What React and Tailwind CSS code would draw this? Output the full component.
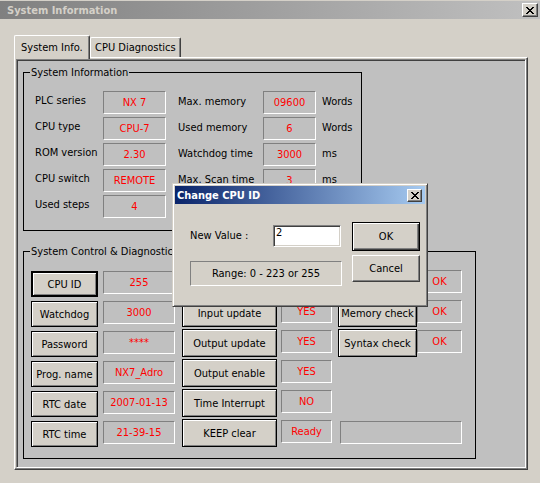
import React from "react";

const FONT = "font-['DejaVu_Sans_Condensed','DejaVu_Sans',sans-serif]";

function CloseX() {
  const px = [
    [0, 0], [1, 0], [6, 0], [7, 0],
    [1, 1], [2, 1], [5, 1], [6, 1],
    [2, 2], [3, 2], [4, 2], [5, 2],
    [3, 3], [4, 3],
    [2, 4], [3, 4], [4, 4], [5, 4],
    [1, 5], [2, 5], [5, 5], [6, 5],
    [0, 6], [1, 6], [6, 6], [7, 6],
  ];
  return (
    <svg width="8" height="7" viewBox="0 0 8 7" shapeRendering="crispEdges">
      {px.map(([x, y], i) => (
        <rect key={i} x={x} y={y} width="1" height="1" fill="#000" />
      ))}
    </svg>
  );
}

function CloseBtn({ className }) {
  return (
    <div
      className={`flex items-center justify-center bg-[#d4d0c8] border border-t-white border-l-white border-r-[#404040] border-b-[#404040] shadow-[inset_-1px_-1px_0_#808080] ${className}`}
    >
      <CloseX />
    </div>
  );
}

function Val({ children, className }) {
  return (
    <div
      className={`flex items-center justify-center border border-t-[#808080] border-l-[#808080] border-r-white border-b-white text-[#ff0000] ${className}`}
    >
      {children}
    </div>
  );
}

function Btn({ children, className, focused }) {
  return (
    <div
      className={`flex items-center justify-center bg-[#d4d0c8] border-black shadow-[inset_1px_1px_0_#fff,inset_-1px_-1px_0_#808080] ${
        focused ? "border-2" : "border"
      } ${className}`}
    >
      {children}
    </div>
  );
}

const infoRows = [
  ["PLC series", "NX 7", "Max. memory", "09600", "Words"],
  ["CPU type", "CPU-7", "Used memory", "6", "Words"],
  ["ROM version", "2.30", "Watchdog time", "3000", "ms"],
  ["CPU switch", "REMOTE", "Max. Scan time", "3", "ms"],
  ["Used steps", "4", "", "", ""],
];

// Row 0 of the middle/right columns lies under the dialog; only the "OK" value shows.
const ctrlRows = [
  ["CPU ID", "255", "", "", "", "OK"],
  ["Watchdog", "3000", "Input update", "YES", "Memory check", "OK"],
  ["Password", "****", "Output update", "YES", "Syntax check", "OK"],
  ["Prog. name", "NX7_Adro", "Output enable", "YES", null, null],
  ["RTC date", "2007-01-13", "Time Interrupt", "NO", null, null],
  ["RTC time", "21-39-15", "KEEP clear", "Ready", "empty", null],
];

export default function App() {
  return (
    <div
      className={`${FONT} relative w-[540px] h-[483px] overflow-hidden bg-[#d4d0c8] text-[11px] leading-[13px] text-black`}
    >
      {/* Window title bar */}
      <div className="mt-[1px] h-[18px] flex items-center justify-between pl-[7px] pr-[2px] bg-[linear-gradient(to_right,#808080,#c0c0c0)]">
        <span className="font-bold text-[#d4d0c8]">System Information</span>
        <CloseBtn className="w-[16px] h-[14px]" />
      </div>

      <div className="pl-[14px] pt-[16px]">
        {/* Tabs */}
        <div className="flex items-end">
          <div className="relative z-10 -mb-[2px] h-[24px] w-[76px] pl-[6px] pt-[5px] bg-[#d4d0c8] border-l border-t border-r border-l-white border-t-white border-r-[#404040] rounded-t-[2px] shadow-[inset_-1px_0_0_#808080]">
            System Info.
          </div>
          <div className="h-[20px] w-[91px] pl-[4px] pt-[3px] bg-[#d4d0c8] border-l border-t border-r border-l-white border-t-white border-r-[#404040] rounded-t-[2px] shadow-[inset_-1px_0_0_#808080]">
            CPU Diagnostics
          </div>
        </div>

        {/* Tab page */}
        <div className="w-[514px] h-[413px] flex p-[1px] bg-[#d4d0c8] border border-t-white border-l-white border-r-[#404040] border-b-[#404040] shadow-[inset_-1px_-1px_0_#808080]">
          <div className="flex-1 flex flex-col pl-[6px] pt-[6px] bg-[#c0c0c0] border border-t-[#808080] border-l-[#808080] border-r-white border-b-white shadow-[inset_1px_1px_0_#404040]">
            {/* System Information group */}
            <fieldset className="w-[339px] h-[165px] min-w-0 border border-black">
              <legend className="ml-[6px] px-[1px] leading-[13px]">System Information</legend>
              <div className="mt-[12px] ml-[11px] grid grid-cols-[68px_63px_97px_53px_auto] auto-rows-[23px] gap-y-[3px]">
                {infoRows.map((r, i) => (
                  <React.Fragment key={i}>
                    <div className="pt-[3px]">{r[0]}</div>
                    <Val>{r[1]}</Val>
                    <div className="pt-[4px] pl-[12px]">{r[2]}</div>
                    {r[3] ? <Val>{r[3]}</Val> : <div />}
                    <div className="pt-[4px] pl-[6px]">{r[4]}</div>
                  </React.Fragment>
                ))}
              </div>
            </fieldset>

            {/* System Control & Diagnostics group */}
            <fieldset className="mt-[14px] w-[453px] h-[214px] min-w-0 border border-black">
              <legend className="ml-[6px] px-[1px] leading-[13px]">System Control &amp; Diagnostics</legend>
              <div className="mt-[11px] ml-[7px] flex flex-col">
                {ctrlRows.map((r, i) => (
                  <div key={i} className="flex items-start h-[30px]">
                    <Btn focused={i === 0} className="mt-[2px] w-[67px] h-[26px]">
                      {r[0]}
                    </Btn>
                    <Val className="ml-[5px] mt-[2px] w-[72px] h-[23px]">{r[1]}</Val>
                    <Btn className="ml-[7px] w-[95px] h-[28px]">{r[2]}</Btn>
                    <Val className="ml-[4px] mt-[1px] w-[51px] h-[23px]">{r[3]}</Val>
                    {r[4] === "empty" ? (
                      <Val className="ml-[8px] mt-[2px] w-[122px] h-[23px]" />
                    ) : r[4] !== null ? (
                      <>
                        <Btn className="ml-[6px] w-[79px] h-[28px]">{r[4]}</Btn>
                        <Val className="mt-[1px] w-[45px] h-[23px]">{r[5]}</Val>
                      </>
                    ) : null}
                  </div>
                ))}
              </div>
            </fieldset>
          </div>
        </div>
      </div>

      {/* Change CPU ID dialog */}
      <div className="absolute left-[172px] top-[183px] w-[256px] h-[124px] flex flex-col p-[2px] bg-[#d4d0c8] border border-t-[#d4d0c8] border-l-[#d4d0c8] border-r-[#404040] border-b-[#404040] shadow-[inset_1px_1px_0_#fff,inset_-1px_-1px_0_#808080]">
        <div className="h-[18px] flex items-center justify-between pl-[2px] pr-[3px] bg-[linear-gradient(to_right,#0a246a,#a6caf0)]">
          <span className="font-bold text-white">Change CPU ID</span>
          <CloseBtn className="w-[15px] h-[13px]" />
        </div>
        <div className="flex">
          <div className="pl-[15px] pt-[21px] flex flex-col">
            <div className="flex items-start">
              <div className="w-[83px] pt-[4px]">New Value :</div>
              <div className="w-[68px] h-[22px] pl-[2px] bg-white border border-t-[#808080] border-l-[#808080] border-r-white border-b-white shadow-[inset_1px_1px_0_#404040,inset_-1px_-1px_0_#d4d0c8]">
                2
              </div>
            </div>
            <div className="mt-[14px] w-[152px] h-[25px] flex items-center justify-center border border-t-[#808080] border-l-[#808080] border-r-white border-b-white">
              Range: 0 - 223 or 255
            </div>
          </div>
          <div className="ml-[10px] pt-[18px] flex flex-col">
            <div className="w-[68px] h-[29px] flex items-center justify-center border border-black shadow-[inset_1px_1px_0_#fff,inset_-1px_-1px_0_#404040,inset_-2px_-2px_0_#808080]">
              OK
            </div>
            <div className="mt-[4px] w-[68px] h-[27px] flex items-center justify-center border border-t-white border-l-white border-r-[#404040] border-b-[#404040] shadow-[inset_-1px_-1px_0_#808080]">
              Cancel
            </div>
          </div>
        </div>
      </div>
    </div>
  );
}
